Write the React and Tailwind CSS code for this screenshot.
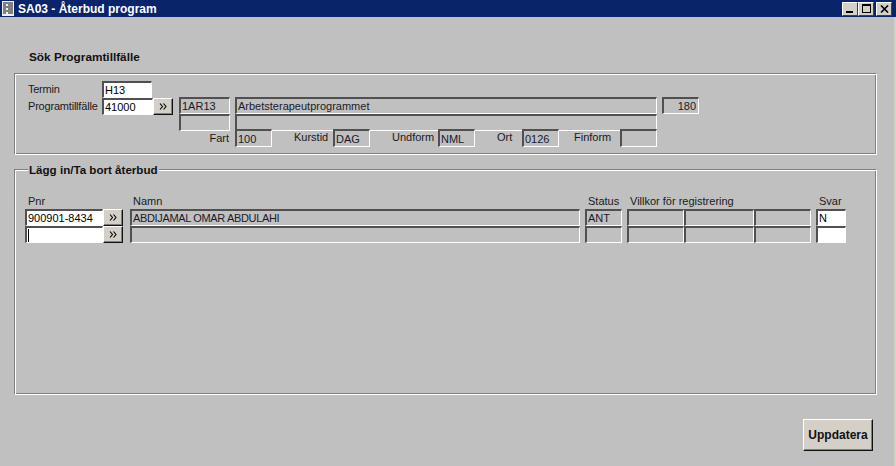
const sunken = "box-border border-t-2 border-l-2 border-b border-r border-t-[#505050] border-l-[#505050] border-b-white border-r-white flex items-center overflow-hidden whitespace-nowrap pl-px text-[11px] leading-none text-[#1a1a2a]";

function Field({ w, h = "h-[17px]", white, right, className = "", children }) {
  return (
    <div className={`${sunken} ${w} ${h} ${white ? "bg-white text-black" : "bg-[#c0c0c0]"} ${right ? "justify-end pr-[2px]" : ""} ${className}`}>
      {children}
    </div>
  );
}

const raised = "box-border bg-[#d4d0c8] border border-t-white border-l-white border-b-[#111111] border-r-[#111111] shadow-[inset_-1px_-1px_0_#808080]";

function Arrow({ h = "h-[17px]" }) {
  return (
    <div className={`${raised} w-[20px] ${h} flex items-center justify-center`}>
      <svg width="9" height="7" viewBox="0 0 9 7" fill="none" stroke="#000" strokeWidth="1.1">
        <path d="M1 .5 L3.5 3.5 L1 6.5 M4.5 .5 L7 3.5 L4.5 6.5" />
      </svg>
    </div>
  );
}

function Label({ className = "", children }) {
  return <span className={`text-[11px] leading-none text-[#1a1a1a] whitespace-nowrap ${className}`}>{children}</span>;
}

function WinBtn({ children, className = "" }) {
  return (
    <div className={`box-border w-[16px] h-[14px] bg-[#d4d0c8] border-t border-l border-t-white border-l-white border-b border-r border-b-[#404040] border-r-[#404040] flex items-center justify-center ${className}`}>
      {children}
    </div>
  );
}

const panel = "box-border border border-t-[#808080] border-l-[#808080] border-b-white border-r-white shadow-[inset_1px_1px_0_#ffffff,inset_-1px_-1px_0_#808080]";

export default function App() {
  return (
    <div className="w-[896px] h-[466px] flex flex-col overflow-hidden bg-[#c0c0c0] font-['Liberation_Sans',Arial,sans-serif]">
      <div className="h-[17px] shrink-0 bg-[#0a246a] flex items-center pl-[2px] pr-[4px]">
        <svg width="12" height="15" viewBox="0 0 12 15" className="shrink-0">
          <rect x="0" y="0" width="12" height="15" fill="#f0f0f0" />
          <path d="M1 2h10M1 4h3M6 4h5M1 6h10M1 8h3M6 8h5M1 10h10M1 12h3M6 12h5" stroke="#111" strokeWidth="1" />
        </svg>
        <span className="ml-[4px] text-white font-bold text-[12px] leading-none">SA03 - Återbud program</span>
        <div className="ml-auto flex items-center">
          <WinBtn>
            <div className="w-[7px] h-[2px] bg-black mt-[6px] mr-[2px]" />
          </WinBtn>
          <WinBtn className="mr-[2px]">
            <div className="w-[9px] h-[9px] border border-black border-t-2" />
          </WinBtn>
          <WinBtn>
            <svg width="9" height="8" viewBox="0 0 9 8" stroke="#000" strokeWidth="1.6">
              <path d="M1 0.5 L8 7.5 M8 0.5 L1 7.5" />
            </svg>
          </WinBtn>
        </div>
      </div>

      <div className="flex-1 flex">
        <div className="flex-1 flex flex-col">
          <div className="pl-[29px] pt-[33px] h-[56px] box-border">
            <span className="font-bold text-[11.8px] leading-[14px] text-[#111111] block">Sök Programtillfälle</span>
          </div>

          <section className={`${panel} ml-[14px] w-[863px] h-[82px] pl-[13px] pt-[7px]`}>
            <div className="flex">
              <div className="w-[74px] flex flex-col">
                <div className="h-[17px] flex items-center"><Label className="tracking-[-0.25px]">Termin</Label></div>
                <div className="h-[16px] flex items-center"><Label className="tracking-[-0.2px]">Programtillfälle</Label></div>
              </div>
              <div className="flex flex-col">
                <Field w="w-[50px]" white>H13</Field>
                <div className="flex">
                  <Field w="w-[51px]" h="h-[17px]" white>41000</Field>
                  <Arrow />
                </div>
              </div>
              <div className="flex flex-col ml-[6px] mt-[16px]">
                <Field w="w-[51px]">1AR13</Field>
                <Field w="w-[51px]" />
              </div>
              <div className="flex flex-col ml-[5px] mt-[16px]">
                <Field w="w-[422px]">Arbetsterapeutprogrammet</Field>
                <Field w="w-[422px]" />
              </div>
              <div className="ml-[5px] mt-[16px]">
                <Field w="w-[37px]" right>180</Field>
              </div>
            </div>
            <div className="flex items-start -mt-[2px] ml-[157px]">
              <div className="w-[50px] h-[18px] flex items-center justify-end pr-[6px]"><Label>Fart</Label></div>
              <Field w="w-[37px]" h="h-[18px]" className="pt-[2px]">100</Field>
              <div className="ml-[22px] w-[39px] h-[16px] flex items-center"><Label>Kurstid</Label></div>
              <Field w="w-[37px]" h="h-[18px]" className="pt-[2px]">DAG</Field>
              <div className="ml-[22px] w-[46px] h-[16px] flex items-center"><Label>Undform</Label></div>
              <Field w="w-[37px]" h="h-[18px]" className="pt-[2px]">NML</Field>
              <div className="ml-[22px] w-[25px] h-[16px] flex items-center"><Label>Ort</Label></div>
              <Field w="w-[37px]" h="h-[18px]" className="pt-[2px]">0126</Field>
              <div className="ml-[15px] w-[46px] h-[16px] flex items-center"><Label>Finform</Label></div>
              <Field w="w-[37px]" h="h-[18px]" />
            </div>
          </section>

          <section className={`${panel} relative ml-[14px] mt-[14px] w-[863px] h-[226px] pl-[10px] pt-[24px]`}>
            <span className="absolute left-[13px] -top-[7px] bg-[#c0c0c0] px-px font-bold text-[11.6px] leading-[14px] text-[#111111]">Lägg in/Ta bort återbud</span>
            <div className="flex">
              <div className="flex flex-col">
                <div className="h-[15px] pl-[3px] flex items-center"><Label>Pnr</Label></div>
                <div className="flex">
                  <Field w="w-[78px]" white>900901-8434</Field>
                  <Arrow />
                </div>
                <div className="flex">
                  <Field w="w-[78px]" white><div className="w-px h-[13px] bg-black" /></Field>
                  <Arrow />
                </div>
              </div>
              <div className="flex flex-col ml-[7px]">
                <div className="h-[15px] pl-[3px] flex items-center"><Label>Namn</Label></div>
                <Field w="w-[450px]"><span className="tracking-[-0.35px]">ABDIJAMAL OMAR ABDULAHI</span></Field>
                <Field w="w-[450px]" />
              </div>
              <div className="flex flex-col ml-[5px]">
                <div className="h-[15px] pl-[3px] flex items-center"><Label>Status</Label></div>
                <Field w="w-[37px]">ANT</Field>
                <Field w="w-[37px]" />
              </div>
              <div className="flex flex-col ml-[5px]">
                <div className="h-[15px] pl-[3px] flex items-center"><Label>Villkor för registrering</Label></div>
                <div className="grid grid-cols-[57px_70px_57px]">
                  <Field w="w-full" /><Field w="w-full" /><Field w="w-full" />
                  <Field w="w-full" /><Field w="w-full" /><Field w="w-full" />
                </div>
              </div>
              <div className="flex flex-col ml-[5px]">
                <div className="h-[15px] pl-[3px] flex items-center"><Label>Svar</Label></div>
                <Field w="w-[30px]" white>N</Field>
                <Field w="w-[30px]" white />
              </div>
            </div>
          </section>

          <div className="flex justify-end mt-[24px] mr-[21px]">
            <button className={`${raised} w-[70px] h-[32px] font-bold text-[12px] leading-none text-[#111111]`}>
              Uppdatera
            </button>
          </div>
        </div>
        <div className="w-[2px] bg-[#d4d0c8]" />
      </div>
    </div>
  );
}
